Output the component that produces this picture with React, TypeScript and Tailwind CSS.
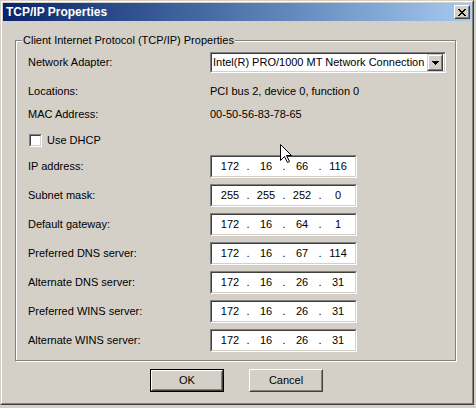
import React from 'react';

const font = { fontFamily: '"Liberation Sans", Arial, sans-serif' };

const fields: [string, string[]][] = [
  ['IP address:', ['172', '16', '66', '116']],
  ['Subnet mask:', ['255', '255', '252', '0']],
  ['Default gateway:', ['172', '16', '64', '1']],
  ['Preferred DNS server:', ['172', '16', '67', '114']],
  ['Alternate DNS server:', ['172', '16', '26', '31']],
  ['Preferred WINS server:', ['172', '16', '26', '31']],
  ['Alternate WINS server:', ['172', '16', '26', '31']],
];

const Sunken = ({ className, children }: { className: string; children?: React.ReactNode }) => (
  <div className={`border border-t-[#808080] border-l-[#808080] border-b-white border-r-white ${className}`}>
    <div className="h-full w-full border border-t-[#404040] border-l-[#404040] border-b-[#d4d0c8] border-r-[#d4d0c8] bg-white">
      {children}
    </div>
  </div>
);

const IpField = ({ parts }: { parts: string[] }) => (
  <Sunken className="w-[147px] h-[23px]">
    <div className="flex h-full items-center pl-[3px] text-[11px] text-black">
      {parts.map((p, i) => (
        <React.Fragment key={i}>
          {i > 0 && <span className="w-[6px] text-center">.</span>}
          <span className="w-[30px] text-center">{p}</span>
        </React.Fragment>
      ))}
    </div>
  </Sunken>
);

const Button = ({ label, def }: { label: string; def?: boolean }) => (
  <div className={`w-[74px] h-[23px] ${def ? 'border border-black' : ''}`}>
    <div className="h-full border border-t-white border-l-white border-b-[#404040] border-r-[#404040]">
      <div className="h-full flex items-center justify-center border border-t-[#d4d0c8] border-l-[#d4d0c8] border-b-[#808080] border-r-[#808080] text-[11px] text-black">
        {label}
      </div>
    </div>
  </div>
);

const App = () => {
  return (
    <div className="w-[476px] h-[408px] bg-[#d4d0c8] relative overflow-hidden" style={font}>
      <div className="w-[474px] h-[405px] border border-t-[#d4d0c8] border-l-[#d4d0c8] border-b-[#404040] border-r-[#404040]">
        <div className="h-full border border-t-white border-l-white border-b-[#808080] border-r-[#808080] p-[1px]">
          {/* title bar */}
          <div className="h-[18px] flex items-center justify-between bg-linear-to-r from-[#0a246a] to-[#a6caf0] pl-[3px] pr-[1px]">
            <span className="text-white font-bold text-[12px] leading-none">TCP/IP Properties</span>
            <div className="w-[16px] h-[14px] border border-t-white border-l-white border-b-[#404040] border-r-[#404040] bg-[#d4d0c8]">
              <div className="h-full flex items-center justify-center border border-t-[#d4d0c8] border-l-[#d4d0c8] border-b-[#808080] border-r-[#808080]">
                <svg width="8" height="7" viewBox="0 0 8 7" shapeRendering="crispEdges">
                  <path d="M0 0h2v1h-2zM6 0h2v1h-2zM1 1h2v1h-2zM5 1h2v1h-2zM2 2h4v1h-4zM3 3h2v1h-2zM2 4h4v1h-4zM1 5h2v1h-2zM5 5h2v1h-2zM0 6h2v1h-2zM6 6h2v1h-2z" fill="#000" />
                </svg>
              </div>
            </div>
          </div>

          {/* group box */}
          <div className="relative ml-[12px] mt-[19px] w-[441px] border border-[#808080] shadow-[inset_1px_1px_0_#fff,1px_1px_0_#fff] pt-[11px] pl-[12px] pr-[9px] pb-[8px] text-[11px] text-black">
            <span className="absolute left-[6px] top-[-7px] px-[1px] bg-[#d4d0c8] leading-[13px]">
              Client Internet Protocol (TCP/IP) Properties
            </span>
            <div className="flex items-center h-[21px]">
              <span className="w-[182px]">Network Adapter:</span>
              <Sunken className="w-[236px] h-[21px]">
                <div className="flex h-full items-center justify-between pl-[1px] pr-[1px]">
                  <span>Intel(R) PRO/1000 MT Network Connection</span>
                  <div className="w-[16px] h-[17px] border border-t-[#d4d0c8] border-l-[#d4d0c8] border-b-[#404040] border-r-[#404040]">
                    <div className="h-full flex items-center justify-center border border-t-white border-l-white border-b-[#808080] border-r-[#808080] bg-[#d4d0c8]">
                      <svg width="7" height="4" viewBox="0 0 7 4" shapeRendering="crispEdges">
                        <path d="M0 0h7v1h-7zM1 1h5v1h-5zM2 2h3v1h-3zM3 3h1v1h-1z" fill="#000" />
                      </svg>
                    </div>
                  </div>
                </div>
              </Sunken>
            </div>
            <div className="flex items-center h-[23px] mt-[7px]">
              <span className="w-[182px]">Locations:</span>
              <span>PCI bus 2, device 0, function 0</span>
            </div>
            <div className="flex items-center h-[23px]">
              <span className="w-[182px]">MAC Address:</span>
              <span>00-50-56-83-78-65</span>
            </div>
            <div className="flex items-center h-[23px] mt-[3px] pl-[1px]">
              <Sunken className="w-[13px] h-[13px]" />
              <span className="ml-[5px]">Use DHCP</span>
            </div>
            <div className="flex flex-col gap-[6px] mt-[3px]">
              {fields.map(([label, parts]) => (
                <div key={label} className="flex items-center h-[23px]">
                  <span className="w-[182px]">{label}</span>
                  <IpField parts={parts} />
                </div>
              ))}
            </div>
          </div>

          {/* buttons */}
          <div className="flex mt-[8px] pl-[147px] gap-[25px]">
            <Button label="OK" def />
            <Button label="Cancel" />
          </div>
        </div>
      </div>

      {/* mouse cursor */}
      <svg className="absolute left-[280px] top-[144px]" width="12" height="19" viewBox="0 0 12 19">
        <path d="M0.5 0.5 L0.5 16.5 L4.5 12.5 L7.5 18.5 L9.5 17.5 L6.5 11.5 L11.5 11.5 Z" fill="#fff" stroke="#000" strokeWidth="1" />
      </svg>
    </div>
  );
};

export default App;
